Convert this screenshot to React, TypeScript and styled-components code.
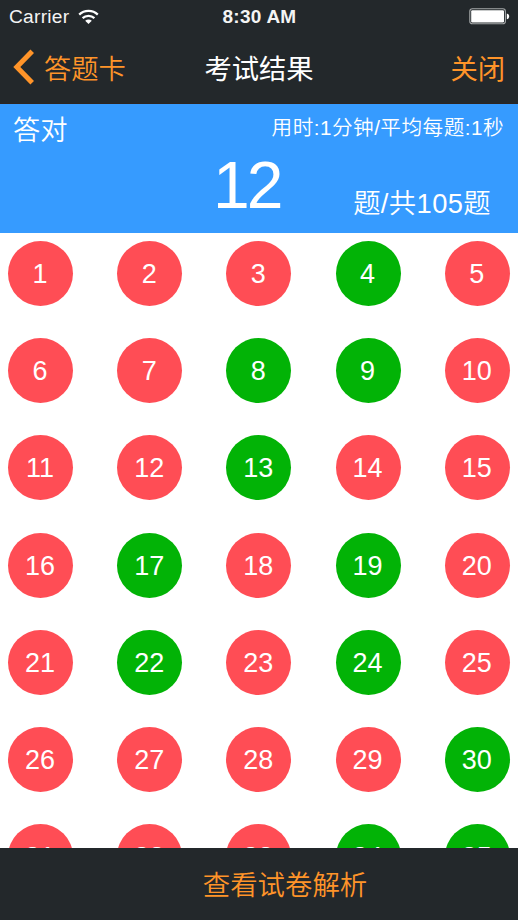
import React from 'react';
import styled, { createGlobalStyle } from 'styled-components';

const GlobalStyle = createGlobalStyle`
  * { box-sizing: border-box; }
  body { margin: 0; background: #fff; }
  button { border: 0; padding: 0; background: none; font: inherit; color: inherit; }
`;

const Screen = styled.div`
  width: 518px;
  height: 920px;
  display: flex;
  flex-direction: column;
  overflow: hidden;
  background: #fff;
  font-family: "Liberation Sans", "Noto Sans CJK SC", sans-serif;
  font-weight: 350;
  white-space: nowrap;
`;

const StatusBar = styled.div`
  flex: none;
  height: 33px;
  display: grid;
  grid-template-columns: 1fr auto 1fr;
  align-items: center;
  padding: 0 8px 0 9px;
  background: #23282b;
  color: #f4f4f4;
  font-size: 19.2px;
`;

const Carrier = styled.div`
  display: flex;
  align-items: center;
  gap: 9px;
  letter-spacing: 0.25px;
`;

const Clock = styled.div`
  font-weight: 700;
  font-size: 19px;
  letter-spacing: 0.25px;
`;

const BatteryIcon = styled.svg`
  justify-self: end;
`;

const NavBar = styled.header`
  flex: none;
  height: 71px;
  display: grid;
  grid-template-columns: 1fr auto 1fr;
  align-items: center;
  padding: 0 13px 2px 13px;
  background: #23282b;
  border-bottom: 1px solid #2c2522;
  color: #ff9429;
  font-family: "Noto Sans CJK SC", sans-serif;
  font-size: 27.3px;
`;

const BackButton = styled.button`
  display: flex;
  align-items: center;
  gap: 9px;
`;

const Title = styled.h1`
  margin: 0;
  font: inherit;
  font-weight: 400;
  color: #fff;
`;

const CloseButton = styled.button`
  justify-self: end;
  font-weight: 400;
`;

const Summary = styled.section`
  flex: none;
  height: 129px;
  display: grid;
  grid-template-columns: 213px 1fr;
  grid-template-rows: 53px 1fr;
  background: #369bff;
  color: #fff;
`;

const SummaryLabel = styled.div`
  padding-left: 13px;
  font-size: 27.3px;
  line-height: 54px;
`;

const Timing = styled.div`
  justify-self: end;
  padding-right: 14px;
  font-size: 20.6px;
  line-height: 48px;
  letter-spacing: 0.5px;
`;

const Score = styled.div`
  grid-column: 2;
  display: flex;
  justify-content: space-between;
  padding-right: 27px;
`;

const ScoreValue = styled.strong`
  font-weight: 400;
  font-size: 66px;
  line-height: 57px;
  letter-spacing: -3px;
`;

const ScoreTotal = styled.span`
  font-size: 27.3px;
  line-height: 94px;
  letter-spacing: 0.4px;
`;

const AnswerGrid = styled.main`
  flex: 1;
  min-height: 0;
  overflow: hidden;
  display: grid;
  grid-template-columns: repeat(5, 65px);
  grid-auto-rows: 65px;
  align-content: start;
  gap: 32.2px 44.2px;
  padding: 8px 8px 0;
`;

const Answer = styled.button<{ $correct: boolean }>`
  width: 65px;
  height: 65px;
  padding: 2px 1px 0 0;
  border-radius: 50%;
  background: ${({ $correct }) => ($correct ? '#02b306' : '#ff4d55')};
  color: #fff;
  font-size: 27px;
  line-height: 63px;
  text-align: center;
`;

const BottomBar = styled.footer`
  flex: none;
  height: 72px;
  padding: 0 0 2px 52px;
  display: flex;
  align-items: center;
  justify-content: center;
  background: #23282b;
  color: #ff9429;
  font-family: "Noto Sans CJK SC", sans-serif;
  font-size: 27.4px;
`;

const CORRECT = new Set([4, 8, 9, 13, 17, 19, 22, 24, 30, 34, 35]);
const QUESTIONS = Array.from({ length: 35 }, (_, i) => i + 1);

export default function App() {
  return (
    <>
      <GlobalStyle />
      <Screen>
        <StatusBar>
          <Carrier>
            Carrier
            <svg width="21" height="16" viewBox="0 0 21 16" fill="none" stroke="#fff" strokeWidth="2.3">
              <path d="M1.2 5.6C6.3.7 14.7.7 19.8 5.6" />
              <path d="M4.6 9.1c3.3-3.1 8.5-3.1 11.8 0" />
              <path d="M10.5 15 7.2 11.7c1.9-1.7 4.7-1.7 6.6 0z" fill="#fff" stroke="none" />
            </svg>
          </Carrier>
          <Clock>8:30 AM</Clock>
          <BatteryIcon width="41" height="17" viewBox="0 0 41 17">
            <rect x="0.8" y="0.8" width="35.6" height="15" rx="2.6" fill="none" stroke="#a5a8a9" strokeWidth="1.1" />
            <rect x="2.2" y="2.2" width="32.8" height="12.2" rx="1.2" fill="#fff" />
            <path d="M37.8 5.4c3.2.6 3.2 5.2 0 5.8z" fill="#fff" />
          </BatteryIcon>
        </StatusBar>
        <NavBar>
          <BackButton>
            <svg width="22" height="36" viewBox="0 0 22 36" fill="none" stroke="#ff9429" strokeWidth="5">
              <path d="M19.2 2.2 3.8 18l15.4 15.8" />
            </svg>
            答题卡
          </BackButton>
          <Title>考试结果</Title>
          <CloseButton>关闭</CloseButton>
        </NavBar>
        <Summary>
          <SummaryLabel>答对</SummaryLabel>
          <Timing>用时:1分钟/平均每题:1秒</Timing>
          <Score>
            <ScoreValue>12</ScoreValue>
            <ScoreTotal>题/共105题</ScoreTotal>
          </Score>
        </Summary>
        <AnswerGrid>
          {QUESTIONS.map((n) => (
            <Answer key={n} $correct={CORRECT.has(n)}>
              {n}
            </Answer>
          ))}
        </AnswerGrid>
        <BottomBar>
          <button>查看试卷解析</button>
        </BottomBar>
      </Screen>
    </>
  );
}
